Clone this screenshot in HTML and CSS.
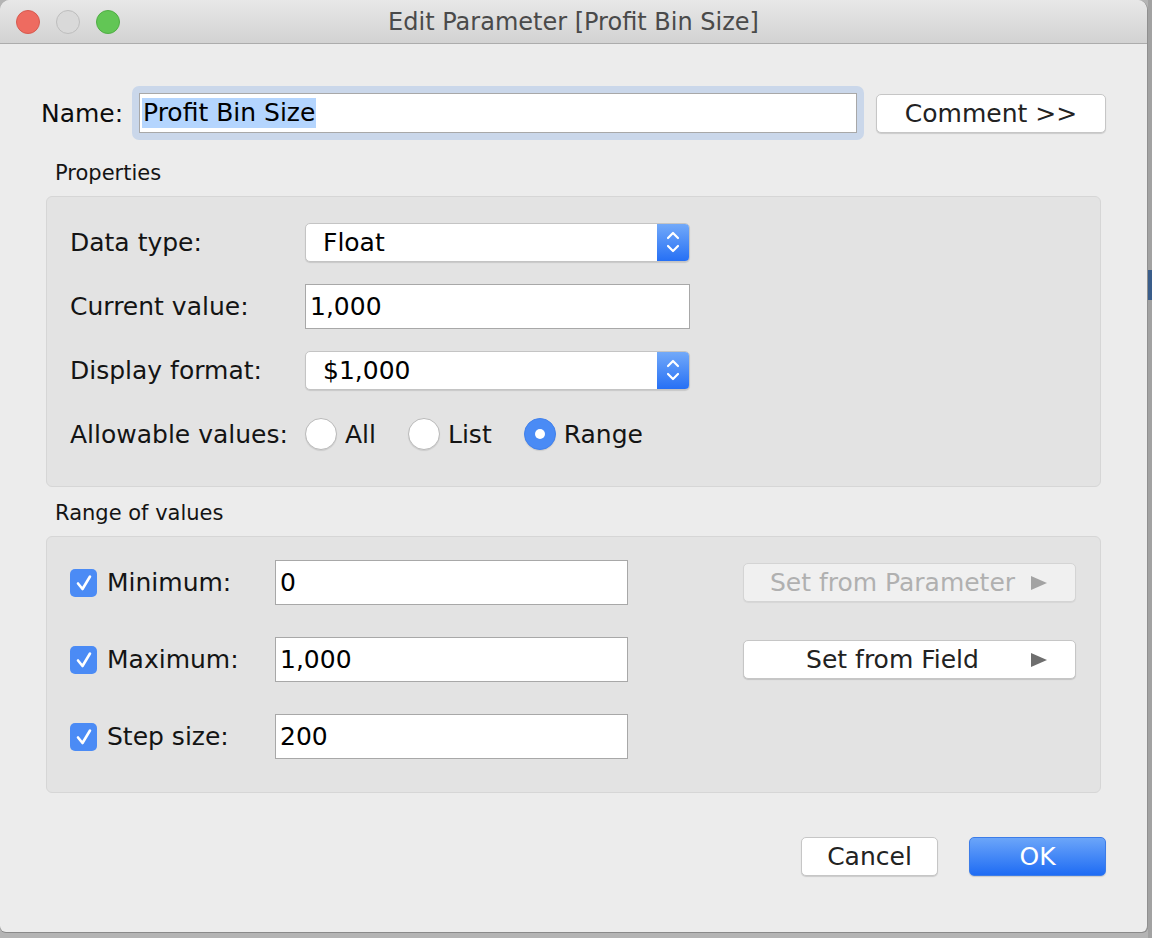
FILE: index.html
```html
<!DOCTYPE html>
<html>
<head>
<meta charset="utf-8">
<title>Edit Parameter</title>
<link rel="stylesheet" href="styles.css">
</head>
<body>
<div class="screen">
  <div class="window">
    <div class="titlebar">
      <div class="lights">
        <span class="light red"></span>
        <span class="light gray"></span>
        <span class="light green"></span>
      </div>
      <div class="title">Edit Parameter [Profit Bin Size]</div>
      <div class="title-spacer"></div>
    </div>
    <div class="content">
      <div class="name-row">
        <div class="name-label">Name:</div>
        <div class="focus-ring">
          <div class="text-input name-input"><span class="sel">Profit Bin Size</span></div>
        </div>
        <div class="btn comment">Comment &gt;&gt;</div>
      </div>

      <div class="section-label">Properties</div>
      <div class="group props">
        <div class="prow">
          <div class="plabel">Data type:</div>
          <div class="select">
            <span class="select-text">Float</span>
            <span class="stepper"><svg width="16" height="28" viewBox="0 0 16 28"><path d="M3 10 L8 5 L13 10 M3 18 L8 23 L13 18" fill="none" stroke="#fff" stroke-width="2.2" stroke-linecap="round" stroke-linejoin="round"/></svg></span>
          </div>
        </div>
        <div class="prow">
          <div class="plabel">Current value:</div>
          <div class="text-input pinput">1,000</div>
        </div>
        <div class="prow">
          <div class="plabel">Display format:</div>
          <div class="select">
            <span class="select-text">$1,000</span>
            <span class="stepper"><svg width="16" height="28" viewBox="0 0 16 28"><path d="M3 10 L8 5 L13 10 M3 18 L8 23 L13 18" fill="none" stroke="#fff" stroke-width="2.2" stroke-linecap="round" stroke-linejoin="round"/></svg></span>
          </div>
        </div>
        <div class="prow">
          <div class="plabel">Allowable values:</div>
          <div class="radios">
            <div class="radio-item"><span class="radio"></span><span>All</span></div>
            <div class="radio-item"><span class="radio"></span><span>List</span></div>
            <div class="radio-item"><span class="radio on"><span class="dot"></span></span><span>Range</span></div>
          </div>
        </div>
      </div>

      <div class="section-label range-label">Range of values</div>
      <div class="group range">
        <div class="rrow">
          <div class="check-label">
            <span class="checkbox"><svg width="22" height="22" viewBox="0 0 22 22"><path d="M5 11.5 L9.5 17 L17 4.5" fill="none" stroke="#fff" stroke-width="2.6" stroke-linecap="round" stroke-linejoin="round"/></svg></span>
            <span>Minimum:</span>
          </div>
          <div class="text-input rinput">0</div>
          <div class="btn side-btn disabled"><span>Set from Parameter</span><span class="tri"></span></div>
        </div>
        <div class="rrow">
          <div class="check-label">
            <span class="checkbox"><svg width="22" height="22" viewBox="0 0 22 22"><path d="M5 11.5 L9.5 17 L17 4.5" fill="none" stroke="#fff" stroke-width="2.6" stroke-linecap="round" stroke-linejoin="round"/></svg></span>
            <span>Maximum:</span>
          </div>
          <div class="text-input rinput">1,000</div>
          <div class="btn side-btn"><span>Set from Field</span><span class="tri"></span></div>
        </div>
        <div class="rrow">
          <div class="check-label">
            <span class="checkbox"><svg width="22" height="22" viewBox="0 0 22 22"><path d="M5 11.5 L9.5 17 L17 4.5" fill="none" stroke="#fff" stroke-width="2.6" stroke-linecap="round" stroke-linejoin="round"/></svg></span>
            <span>Step size:</span>
          </div>
          <div class="text-input rinput">200</div>
        </div>
      </div>

      <div class="footer">
        <div class="btn cancel">Cancel</div>
        <div class="btn ok">OK</div>
      </div>
    </div>
  </div>
  <div class="side"><div class="side-band"></div></div>
</div>
</body>
</html>
```

FILE: styles.css
```css
html, body {
  margin: 0;
  padding: 0;
}

body {
  background: #b4b4b4;
  font-family: "DejaVu Sans", "Liberation Sans", sans-serif;
  font-size: 25px;
  color: #141414;
}

.screen {
  display: flex;
  width: 1152px;
  height: 938px;
  overflow: hidden;
}

.window {
  width: 1148px;
  height: 932px;
  box-sizing: border-box;
  background: #ececec;
  border-right: 1px solid #8f8f8f;
  border-radius: 10px 10px 6px 6px;
  box-shadow: 0 1px 0 #8a8a8a;
  display: flex;
  flex-direction: column;
  overflow: hidden;
  flex-shrink: 0;
}

.side {
  flex: 1;
  background: #a2a2a2;
  padding-top: 270px;
}

.side-band {
  height: 30px;
  background: #3a5d8a;
}

/* Title bar */
.titlebar {
  height: 43px;
  border-bottom: 1px solid #acacac;
  background: linear-gradient(#e8e8e8, #d2d2d2);
  display: grid;
  grid-template-columns: 1fr auto 1fr;
  align-items: center;
  flex-shrink: 0;
}

.lights {
  display: flex;
  gap: 16px;
  padding-left: 16px;
}

.light {
  width: 24px;
  height: 24px;
  border-radius: 50%;
  box-sizing: border-box;
}

.light.red {
  background: #ee6b60;
  border: 1px solid #d65a4f;
}

.light.gray {
  background: #d9d9d9;
  border: 1px solid #bdbdbd;
}

.light.green {
  background: #62c655;
  border: 1px solid #50ad45;
}

.title {
  font-size: 24px;
  color: #4a4a4a;
}

/* Content */
.content {
  padding: 42px 41px 0 41px;
}

.name-row {
  display: flex;
  align-items: center;
  height: 54px;
}

.name-label {
  width: 91px;
  color: #0d0d0d;
}

.focus-ring {
  width: 732px;
  height: 54px;
  box-sizing: border-box;
  padding: 7px;
  background: #cad7ea;
  border-radius: 7px;
}

.text-input {
  background: #fff;
  border: 1px solid #a8a8a8;
  box-sizing: border-box;
  display: flex;
  align-items: center;
  color: #000;
}

.name-input {
  height: 100%;
  padding-left: 2px;
}

.sel {
  background: #b4d5fe;
  line-height: 30px;
  padding: 0 1px;
}

.btn {
  background: #fff;
  border: 1px solid #c6c6c6;
  border-radius: 5px;
  box-shadow: 0 1px 1px rgba(0, 0, 0, 0.14);
  box-sizing: border-box;
  height: 39px;
  display: flex;
  align-items: center;
  justify-content: center;
  color: #222;
}

.comment {
  margin-left: 12px;
  width: 230px;
}

.section-label {
  font-size: 21px;
  line-height: 24px;
  margin: 21px 0 11px 14px;
  color: #141414;
}

.range-label {
  margin-top: 14px;
}

.group {
  margin-left: 5px;
  width: 1055px;
  box-sizing: border-box;
  background: #e3e3e3;
  border: 1px solid #d6d6d6;
  border-radius: 6px;
}

.props {
  height: 291px;
  padding: 13px 0 0 23px;
}

.prow {
  display: flex;
  align-items: center;
  height: 64px;
}

.plabel {
  width: 235px;
}

.select {
  width: 385px;
  height: 39px;
  box-sizing: border-box;
  display: flex;
  background: #fff;
  border: 1px solid #c4c4c4;
  border-radius: 5px;
  box-shadow: 0 1px 1px rgba(0, 0, 0, 0.12);
  overflow: hidden;
  color: #000;
}

.select-text {
  flex: 1;
  padding-left: 17px;
  display: flex;
  align-items: center;
}

.stepper {
  width: 32px;
  background: linear-gradient(#72a9f9, #2670f5);
  display: flex;
  align-items: center;
  justify-content: center;
}

.pinput {
  width: 385px;
  height: 45px;
  padding-left: 4px;
}

.radios {
  display: flex;
  align-items: center;
  gap: 32px;
}

.radio-item {
  display: flex;
  align-items: center;
  gap: 8px;
}

.radio {
  width: 32px;
  height: 32px;
  box-sizing: border-box;
  border-radius: 50%;
  background: #fff;
  border: 1px solid #bababa;
  box-shadow: 0 1px 1px rgba(0, 0, 0, 0.1);
}

.radio.on {
  background: #4a8bf5;
  border-color: #4181ec;
  display: flex;
  align-items: center;
  justify-content: center;
}

.dot {
  width: 10px;
  height: 10px;
  border-radius: 50%;
  background: #fff;
}

.range {
  height: 257px;
  padding: 7px 0 0 23px;
}

.rrow {
  display: flex;
  align-items: center;
  height: 77px;
}

.check-label {
  display: flex;
  align-items: center;
  gap: 10px;
  width: 205px;
}

.checkbox {
  width: 27px;
  height: 28px;
  border-radius: 5px;
  background: #4b8bf5;
  display: flex;
  align-items: center;
  justify-content: center;
}

.rinput {
  width: 353px;
  height: 45px;
  padding-left: 4px;
}

.side-btn {
  margin-left: 115px;
  width: 333px;
  padding-right: 34px;
  position: relative;
}

.side-btn.disabled {
  background: #f0f0f0;
  border-color: #d4d4d4;
  color: #b0b0b0;
  box-shadow: 0 1px 1px rgba(0, 0, 0, 0.06);
}

.tri {
  position: absolute;
  right: 28px;
  top: 12px;
  width: 0;
  height: 0;
  border-left: 16px solid #6e6e6e;
  border-top: 7px solid transparent;
  border-bottom: 7px solid transparent;
}

.disabled .tri {
  border-left-color: #a3a3a3;
}

.footer {
  display: flex;
  justify-content: flex-end;
  gap: 31px;
  margin-top: 44px;
}

.cancel,
.ok {
  width: 137px;
}

.ok {
  background: linear-gradient(#6ba5f9, #1f6cf4);
  border-color: #3c7ce8;
  color: #fff;
}
```
